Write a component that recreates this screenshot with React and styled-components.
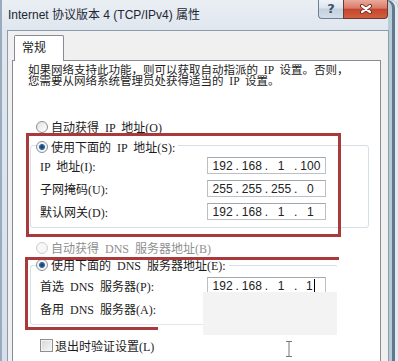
import React from 'react';
import styled, { createGlobalStyle } from 'styled-components';

const uiFont = `"Liberation Serif", "Noto Sans CJK SC", serif`;

const ipFields = [
	{ label: 'IP 地址(I):', octets: ['192', '168', '1', '100'] },
	{ label: '子网掩码(U):', octets: ['255', '255', '255', '0'] },
	{ label: '默认网关(D):', octets: ['192', '168', '1', '1'] },
];

function IpInput({ octets, caret }) {
	return (
		<IpBox>
			{octets.map((o, i) => (
				<React.Fragment key={i}>
					{i > 0 && <Dot>.</Dot>}
					<Octet>
						{o}
						{caret && i === octets.length - 1 && <Caret />}
					</Octet>
				</React.Fragment>
			))}
		</IpBox>
	);
}

function App() {
	return (
		<>
			<GlobalStyle />
			<Window>
				<TitleBar>
					<Title>Internet 协议版本 4 (TCP/IPv4) 属性</Title>
					<CaptionButtons>
						<HelpButton>?</HelpButton>
						<CloseButton>
							<svg width='14' height='10' viewBox='0 0 14 10'>
								<path d='M3 2 L11 8 M11 2 L3 8' stroke='#6b2418' strokeWidth='4' strokeLinecap='round' />
								<path d='M3 2 L11 8 M11 2 L3 8' stroke='#fff' strokeWidth='2.2' strokeLinecap='round' />
							</svg>
						</CloseButton>
					</CaptionButtons>
				</TitleBar>

				<Body>
					<Tab>常规</Tab>
					<Panel>
						<Intro>
							如果网络支持此功能，则可以获取自动指派的 IP 设置。否则，
							<br />
							您需要从网络系统管理员处获得适当的 IP 设置。
						</Intro>

						<Option $top={32}>
							<Radio />
							自动获得 IP 地址(O)
						</Option>

						<GroupBox $top={10} $width={339}>
							<Legend $lift={7}>
								<Radio $checked />
								使用下面的 IP 地址(S):
							</Legend>
							<Fields $gap={2}>
								{ipFields.map((f) => (
									<FieldRow key={f.label}>
										<FieldLabel>{f.label}</FieldLabel>
										<IpInput octets={f.octets} />
									</FieldRow>
								))}
							</Fields>
						</GroupBox>

						<Option $top={12} $disabled>
							<Radio $disabled />
							自动获得 DNS 服务器地址(B)
						</Option>

						<GroupBox $top={9} $width={308} $open>
							<Legend $lift={9}>
								<Radio $checked />
								使用下面的 DNS 服务器地址(E):
							</Legend>
							<Fields $gap={4}>
								<FieldRow>
									<FieldLabel>首选 DNS 服务器(P):</FieldLabel>
									<IpInput octets={['192', '168', '1', '1']} caret />
								</FieldRow>
								<FieldRow>
									<FieldLabel>备用 DNS 服务器(A):</FieldLabel>
								</FieldRow>
							</Fields>
						</GroupBox>

						<CheckRow>
							<Checkbox />
							退出时验证设置(L)
						</CheckRow>

						<RedFrame />
						<RedFrameOpen />
						<Patch />
						<Cursor>
							<svg width='8' height='18' viewBox='0 0 8 18'>
								<path d='M1 1.5 H7 M4 1.5 V16.5 M1 16.5 H7' stroke='#fff' strokeWidth='3' fill='none' />
								<path d='M1 1.5 H7 M4 1.5 V16.5 M1 16.5 H7' stroke='#777' strokeWidth='1' fill='none' />
							</svg>
						</Cursor>
					</Panel>
				</Body>
			</Window>
		</>
	);
}

export default App;

const GlobalStyle = createGlobalStyle`
	html, body {
		margin: 0;
		padding: 0;
		background: #dfe6ee;
	}
	body {
		width: 398px;
		height: 361px;
		overflow: hidden;
	}
`;

const Window = styled.div`
	position: relative;
	width: 398px;
	height: 361px;
	display: flex;
	flex-direction: column;
	overflow: hidden;
	border-top-right-radius: 8px;
	background: linear-gradient(180deg, #eaeff4 0px, #dfe6ee 30px, #d7e0ea 100%);
	box-shadow: inset 2px 0 0 #9aabbd, inset -3px 0 0 #e4ebf0, inset -6px 0 0 #62788b,
		inset -10px 0 0 #b8ccd7;
`;

const TitleBar = styled.div`
	display: flex;
	align-items: flex-start;
	flex-shrink: 0;
	height: 30px;
	padding: 0 10px 0 8px;
`;

const Title = styled.div`
	font: 12px/30px 'Liberation Sans', 'Noto Sans CJK SC', sans-serif;
	color: #1d2733;
	white-space: nowrap;
`;

const CaptionButtons = styled.div`
	display: flex;
	margin-left: auto;
`;

const HelpButton = styled.div`
	width: 25px;
	height: 19px;
	box-sizing: border-box;
	border: 1px solid #6f8093;
	border-top: none;
	border-right: none;
	border-bottom-left-radius: 4px;
	background: linear-gradient(180deg, #eef3f8 0%, #dbe4ee 45%, #c3d1e0 50%, #d2dde9 100%);
	color: #44515f;
	font: bold 13px/18px 'DejaVu Sans', sans-serif;
	text-align: center;
`;

const CloseButton = styled.div`
	width: 45px;
	height: 19px;
	box-sizing: border-box;
	border: 1px solid #6b3a35;
	border-top: none;
	border-bottom-right-radius: 4px;
	background: linear-gradient(180deg, #e9aa9c 0%, #d97b66 45%, #c6442e 52%, #d0603f 100%);
	display: flex;
	align-items: center;
	justify-content: center;
`;

const Body = styled.div`
	flex: 1;
	display: flex;
	flex-direction: column;
	align-items: flex-start;
	min-height: 0;
	margin: 0 9px 0 7px;
	padding: 4px 7px 0 4px;
	background: #f0f0f0;
	border: 1px solid #8d9cad;
	border-bottom: none;
`;

const Tab = styled.div`
	position: relative;
	z-index: 1;
	width: 50px;
	height: 26px;
	box-sizing: border-box;
	margin: 0 0 -1px 2px;
	padding-left: 7px;
	border: 1px solid #898c95;
	border-bottom: none;
	border-radius: 2px 2px 0 0;
	background: #fff;
	font: 12px/24px ${uiFont};
	color: #1c1c1c;
`;

const Panel = styled.div`
	position: relative;
	flex: 1;
	align-self: stretch;
	display: flex;
	flex-direction: column;
	align-items: flex-start;
	background: #fff;
	border: 1px solid #898c95;
	border-bottom: none;
	font: 12px ${uiFont};
	word-spacing: 3px;
	color: #1c1c1c;
`;

const Intro = styled.div`
	margin: 4px 0 0 15px;
	font-size: 11.5px;
	line-height: 11px;
	white-space: nowrap;
`;

const Option = styled.div`
	display: flex;
	align-items: center;
	gap: 3px;
	height: 16px;
	margin: ${(p) => p.$top}px 0 0 23px;
	color: ${(p) => (p.$disabled ? '#8f8f8f' : 'inherit')};
	white-space: nowrap;
`;

const Radio = styled.span`
	flex-shrink: 0;
	width: 12px;
	height: 12px;
	box-sizing: border-box;
	border-radius: 50%;
	border: 1px solid ${(p) => (p.$disabled ? '#cdcdcd' : '#8a8f97')};
	background: ${(p) =>
		p.$checked
			? 'radial-gradient(circle, #10305a 0, #3b6ea6 2.6px, #f2f2f2 3.4px, #fafafa 100%)'
			: p.$disabled
			? '#f7f7f7'
			: 'linear-gradient(135deg, #e2e2e2, #ffffff)'};
`;

const GroupBox = styled.div`
	display: flex;
	flex-direction: column;
	align-items: flex-start;
	box-sizing: border-box;
	width: ${(p) => p.$width}px;
	margin: ${(p) => p.$top}px 0 0 17px;
	padding-bottom: 7px;
	border: 1px solid #d5dfe5;
	border-radius: 3px;
	${(p) => p.$open && 'border-right-color: transparent; border-bottom-color: #e2e7ea;'}
`;

const Legend = styled.div`
	display: flex;
	align-items: center;
	gap: 3px;
	height: 16px;
	margin: -${(p) => p.$lift}px 0 0 5px;
	padding-right: 3px;
	background: #fff;
	white-space: nowrap;
`;

const Fields = styled.div`
	display: flex;
	flex-direction: column;
	gap: 6px;
	margin-top: ${(p) => p.$gap}px;
`;

const FieldRow = styled.div`
	display: flex;
	align-items: center;
	height: 17px;
`;

const FieldLabel = styled.div`
	width: 176px;
	box-sizing: border-box;
	padding-left: 9px;
	white-space: nowrap;
`;

const IpBox = styled.div`
	display: flex;
	align-items: center;
	width: 119px;
	height: 17px;
	box-sizing: border-box;
	padding: 0 2px;
	border: 1px solid #bcc0c6;
	border-top-color: #a3a8ae;
	background: #fff;
	font: 12px 'Liberation Sans', sans-serif;
	word-spacing: 0;
	color: #222;
`;

const Octet = styled.span`
	flex: 1;
	text-align: center;
`;

const Dot = styled.span`
	width: 4px;
	text-align: center;
`;

const Caret = styled.span`
	display: inline-block;
	width: 1px;
	height: 13px;
	margin-left: 1px;
	vertical-align: -2px;
	background: #000;
`;

const CheckRow = styled.div`
	display: flex;
	align-items: center;
	gap: 2px;
	margin: 14px 0 0 27px;
	height: 13px;
	white-space: nowrap;
`;

const Checkbox = styled.span`
	width: 13px;
	height: 13px;
	box-sizing: border-box;
	border: 1px solid #8e8f8f;
	background: linear-gradient(135deg, #d6d6d6, #f8f8f8);
	box-shadow: inset 0 0 0 1px #f4f4f4;
`;

const RedFrame = styled.div`
	position: absolute;
	left: 13px;
	top: 72px;
	width: 315px;
	height: 104px;
	box-sizing: border-box;
	border: 3px solid #a9393b;
	pointer-events: none;
`;

const RedFrameOpen = styled.div`
	position: absolute;
	left: 12px;
	top: 196px;
	width: 314px;
	height: 73px;
	box-sizing: border-box;
	border-top: 3px solid #a9393b;
	border-left: 3px solid #a9393b;
	pointer-events: none;

	&:after {
		position: absolute;
		content: '';
		left: -3px;
		bottom: 0;
		width: 133px;
		height: 3px;
		background: #a9393b;
	}
`;

const Patch = styled.div`
	position: absolute;
	left: 190px;
	top: 231px;
	width: 134px;
	height: 43px;
	background: #f3f3f3;
`;

const Cursor = styled.div`
	position: absolute;
	left: 272px;
	top: 279px;
	line-height: 0;
`;
